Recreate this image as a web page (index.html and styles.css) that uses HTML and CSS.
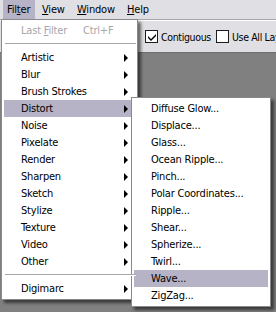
FILE: index.html
```html
<!DOCTYPE html>
<html lang="en">

<head>
    <meta charset="UTF-8">
    <meta name="viewport" content="width=device-width, initial-scale=1.0">
    <title>Filter menu</title>
    <link rel="stylesheet" href="styles.css">
</head>

<body>
    <div class="menubar">
        <span class="top-item filter open">Fil<u>t</u>er</span>
        <span class="top-item view"><u>V</u>iew</span>
        <span class="top-item window"><u>W</u>indow</span>
        <span class="top-item help"><u>H</u>elp</span>
    </div>

    <div class="toolbar">
        <label class="check checked">
            <span class="box">
                <svg width="8" height="8" viewBox="0 0 8 8">
                    <path d="M0 3 L3 6 L8 1 L8 3 L3 8 L0 5 Z" fill="#000" />
                </svg>
            </span>
            Contiguous
        </label>
        <label class="check">
            <span class="box"></span>
            Use All Lay
        </label>
    </div>

    <div class="canvas"></div>

    <!-- menu Filter aperto -->
    <div class="menu main-menu">
        <div class="item disabled">Last <u>F</u>ilter<span class="shortcut">Ctrl+F</span></div>
        <div class="sep"></div>
        <div class="item sub">Artistic</div>
        <div class="item sub">Blur</div>
        <div class="item sub">Brush Strokes</div>
        <div class="item sub active distort">Distort
            <div class="menu sub-menu">
                <div class="item">Diffuse Glow...</div>
                <div class="item">Displace...</div>
                <div class="item">Glass...</div>
                <div class="item">Ocean Ripple...</div>
                <div class="item">Pinch...</div>
                <div class="item">Polar Coordinates...</div>
                <div class="item">Ripple...</div>
                <div class="item">Shear...</div>
                <div class="item">Spherize...</div>
                <div class="item">Twirl...</div>
                <div class="item active">Wave...</div>
                <div class="item">ZigZag...</div>
            </div>
        </div>
        <div class="item sub">Noise</div>
        <div class="item sub">Pixelate</div>
        <div class="item sub">Render</div>
        <div class="item sub">Sharpen</div>
        <div class="item sub">Sketch</div>
        <div class="item sub">Stylize</div>
        <div class="item sub">Texture</div>
        <div class="item sub">Video</div>
        <div class="item sub">Other</div>
        <div class="sep"></div>
        <div class="item sub">Digimarc</div>
    </div>
</body>

</html>
```

FILE: styles.css
```css
body {
    margin: 0;
    height: 312px;
    overflow: hidden;
    background: #808080;
    font-family: "DejaVu Sans Condensed", "DejaVu Sans", sans-serif;
    font-size: 11px;
    letter-spacing: -0.2px;
    color: #000;
    position: relative;
}

u {
    text-decoration: underline;
    text-underline-offset: 1px;
}

.menubar {
    display: flex;
    height: 19px;
    line-height: 19px;
    background: #e0dfe3;
    border-bottom: 1px solid #a7a6aa;
}

.top-item {
    padding-left: 4px;
}

.filter {
    margin-left: 3px;
    width: 28px;
}

.view {
    width: 30px;
    padding-left: 7px;
}

.window {
    width: 45px;
    padding-left: 5px;
}

.help {
    padding-left: 5px;
}

.open {
    background: #b6b3c6;
}

.toolbar {
    display: flex;
    align-items: center;
    height: 31px;
    padding-left: 145px;
    background: #e0dfe3;
    border-top: 1px solid #fff;
    border-bottom: 1px solid #6f6e72;
    white-space: nowrap;
    overflow: hidden;
    font-size: 10.5px;
    letter-spacing: -0.35px;
}

.check {
    display: flex;
    align-items: center;
    gap: 3px;
}

.checked {
    flex: 0 0 71px;
}

.box {
    flex: none;
    width: 11px;
    height: 11px;
    background: #fff;
    border: 1px solid #1c1c1c;
    display: flex;
    align-items: center;
    justify-content: center;
}

.canvas {
    height: 260px;
}

.menu {
    position: absolute;
    background: #fff;
    border: 1px solid #8a898d;
    padding: 2px 0;
    box-shadow: 3px 3px 3px rgba(0, 0, 0, 0.55);
}

.main-menu {
    left: 1px;
    top: 19px;
    width: 133px;
    padding-left: 2px;
}

.sub-menu {
    top: -3px;
    left: 127px;
    width: 134px;
    padding-right: 2px;
    padding-left: 2px;
    color: #000;
}

.item {
    position: relative;
    height: 17px;
    line-height: 17px;
    padding-left: 17px;
    white-space: nowrap;
}

.main-menu > .item {
    width: 113px;
}

.active {
    background: #b6b3c6;
}

.sub-menu .item {
    background: #fff;
}

.sub-menu .item.active {
    background: #b6b3c6;
}

.disabled {
    color: #a7a6aa;
}

.shortcut {
    position: absolute;
    left: 79px;
}

.sub::after {
    content: '';
    position: absolute;
    right: 6px;
    top: 5px;
    border-left: 4px solid #000;
    border-top: 4px solid transparent;
    border-bottom: 4px solid transparent;
}

.sep {
    height: 10px;
    position: relative;
}

.sep::before {
    content: '';
    position: absolute;
    left: 1px;
    right: 1px;
    top: 4px;
    border-top: 1px solid #a7a6aa;
    border-bottom: 1px solid #fff;
}
```
